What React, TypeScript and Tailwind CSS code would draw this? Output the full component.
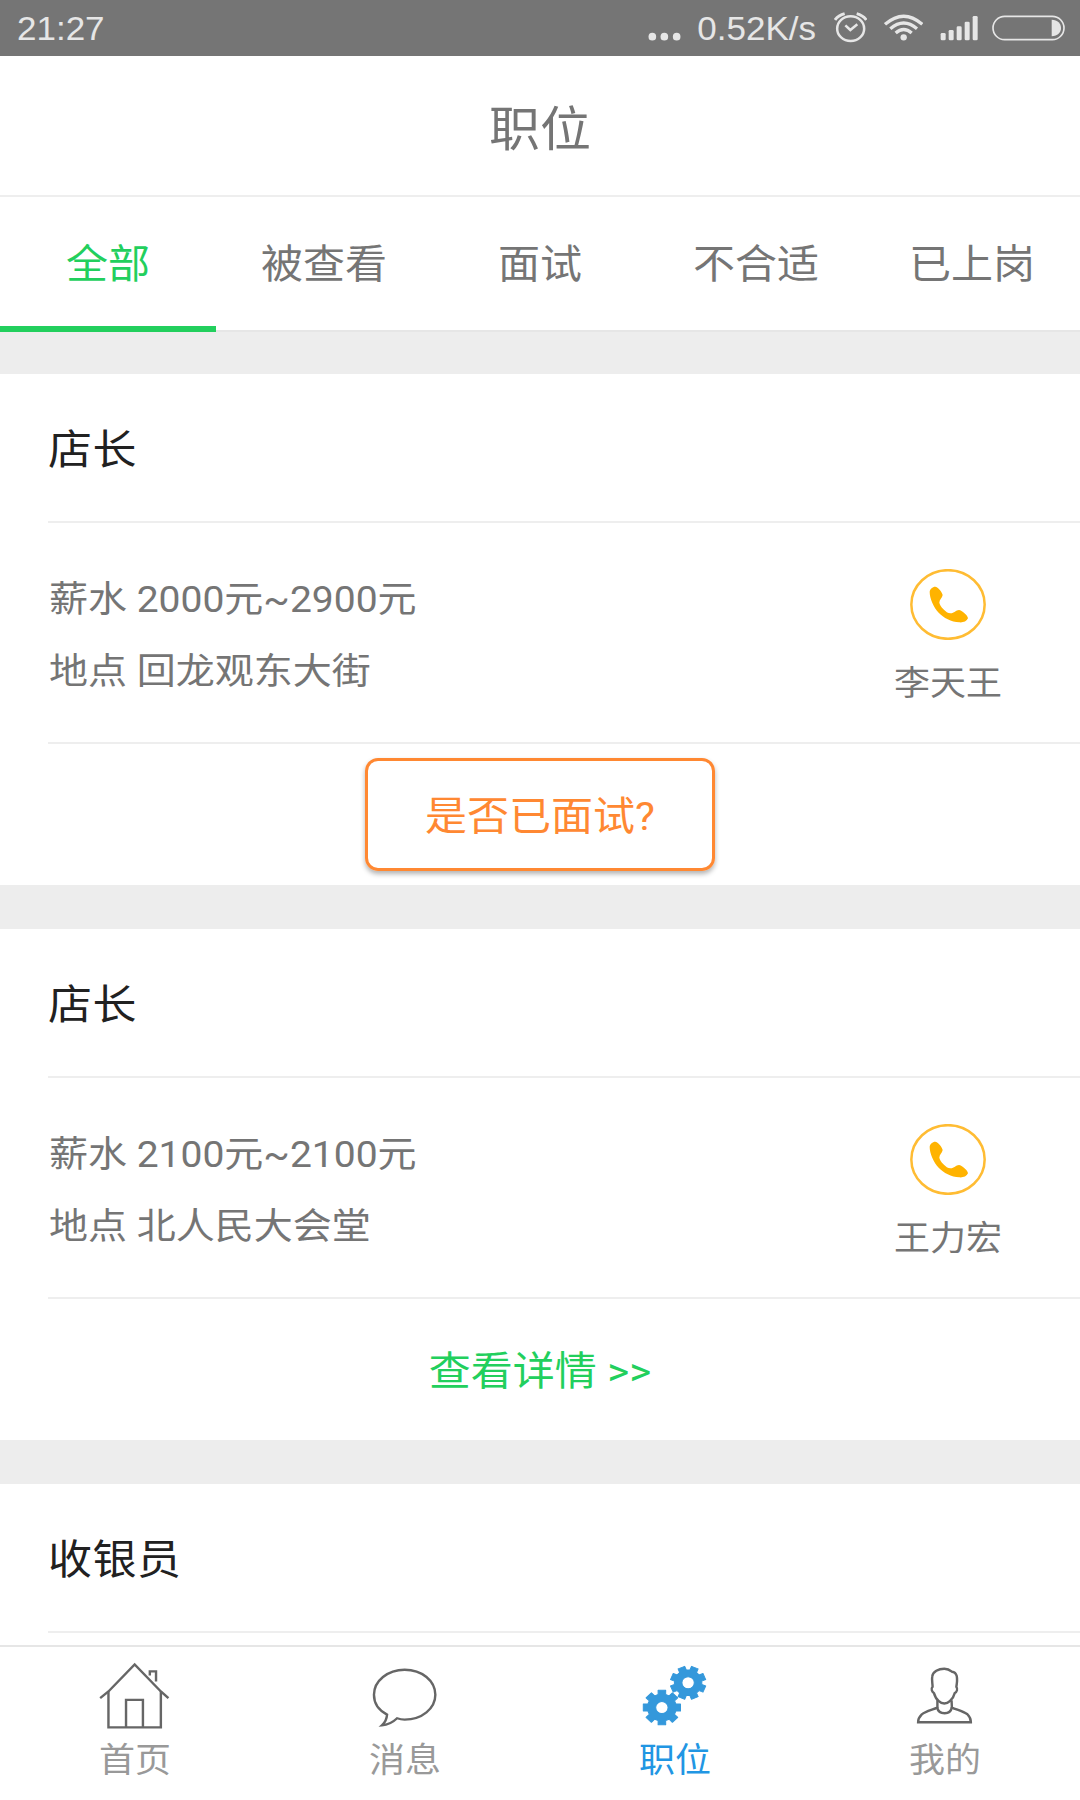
import { ReactNode } from "react";
import clsx from "clsx";

interface Job {
  title: string;
  details?: {
    salary: string;
    place: string;
    contact: string;
    action: "confirm" | "detail";
  };
}

const jobs: Job[] = [
  {
    title: "店长",
    details: { salary: "2000元~2900元", place: "回龙观东大街", contact: "李天王", action: "confirm" },
  },
  {
    title: "店长",
    details: { salary: "2100元~2100元", place: "北人民大会堂", contact: "王力宏", action: "detail" },
  },
  { title: "收银员" },
];

const tabs = ["全部", "被查看", "面试", "不合适", "已上岗"];

// Glyphs are slightly wider than tall across the whole screen
function Label({ children, className = "" }: { children: ReactNode; className?: string }) {
  return (
    <span className={clsx("block scale-y-[0.9375] whitespace-nowrap", className)}>{children}</span>
  );
}

function StatusBar() {
  return (
    <div className="flex h-14 shrink-0 items-center bg-[#757575] pl-[17px] pr-[15px] font-['Liberation_Sans',sans-serif] text-[35px] leading-none text-[#e6e6e6]">
      <Label className="mr-auto">21:27</Label>
      <svg className="mr-4 h-14 w-[33px]" viewBox="52 0 99 168" fill="currentColor">
        <circle cx="65" cy="110" r="11.5" />
        <circle cx="101" cy="110" r="11.5" />
        <circle cx="138" cy="110" r="11.5" />
      </svg>
      <Label>0.52K/s</Label>
      <svg className="ml-[18px] h-14 w-[33px]" viewBox="613 0 99 168" fill="none" stroke="currentColor" strokeWidth="7.500">
        <ellipse cx="663" cy="86" rx="40.500" ry="37" />
        <path d="M647 76 662 90 683 73" />
        <path d="M616 60Q626 46 645 41M681 41Q700 46 710 60" strokeWidth="9" />
      </svg>
      <svg className="ml-[17px] h-14 w-[39px]" viewBox="763 0 117 168" fill="none" stroke="currentColor" strokeWidth="10">
        <path d="M766 73Q822 24 878 73M782 86Q822 52 862 86M798 99Q822 78 846 99" />
        <circle cx="822" cy="112" r="9.500" fill="currentColor" stroke="none" />
      </svg>
      <svg className="ml-[17px] h-14 w-[38px]" viewBox="931 0 114 168" fill="currentColor">
        <rect x="933" y="99" width="15" height="22" rx="4" />
        <rect x="957" y="90" width="15" height="31" rx="4" />
        <rect x="981" y="79" width="15" height="42" rx="4" />
        <rect x="1005" y="65" width="15" height="56" rx="4" />
        <rect x="1029" y="48" width="15" height="73" rx="4" />
      </svg>
      <svg className="ml-3.5 h-14 w-[73px]" viewBox="1087 0 219 168" fill="none" stroke="currentColor" strokeWidth="5">
        <rect x="1090" y="49" width="213" height="70" rx="35" />
        <path d="M1266 59C1284 60 1294 70 1294 84S1284 108 1266 109Z" fill="currentColor" stroke="none" />
      </svg>
    </div>
  );
}

function PhoneIcon() {
  return (
    <svg className="h-[71px] w-[76px]" viewBox="0 0 228 213">
      <ellipse cx="114" cy="106.500" rx="110" ry="103" fill="none" stroke="#ffbc33" strokeWidth="7.500" />
      <path
        fill="#ffb300"
        d="M75 53C83 52 97 70 98 78C97 86 88 92 88 101C90 112 108 132 121 133C131 134 138 123 147 123C155 124 174 139 174 148C170 158 158 161 148 160C124 159 100 146 86 131C70 113 59 88 59 68C60 60 68 53 75 53Z"
      />
    </svg>
  );
}

function JobCard({ title, details }: Job) {
  return (
    <section className="shrink-0 bg-white pl-12">
      <div className="flex h-[149px] items-center border-b-2 border-[#eee] pt-1 text-[44px] tracking-[0.5px] text-[#212121]">
        <Label>{title}</Label>
      </div>
      {details && (
        <>
          <div className="flex h-[221px] justify-between border-b-2 border-[#eee]">
            <div className="pt-[41px] pl-px text-[39px] leading-[72px]">
              <Label>薪水 {details.salary}</Label>
              <Label>地点 {details.place}</Label>
            </div>
            <div className="flex w-[264px] flex-col items-center pt-[46px] text-[36px] leading-[54px]">
              <PhoneIcon />
              <Label className="mt-[17px]">{details.contact}</Label>
            </div>
          </div>
          <div className="-ml-12 flex h-[141px] items-center justify-center text-[42px]">
            {details.action === "confirm" ? (
              <button className="flex h-[113px] w-[350px] items-center justify-center rounded-[13px] border-3 border-[#ff8832] pt-1 text-[#ff8832] shadow-[0_3px_5px_rgba(0,0,0,0.3)]">
                <Label>是否已面试?</Label>
              </button>
            ) : (
              <Label className="pt-1 text-[#22cf5d]">查看详情 &gt;&gt;</Label>
            )}
          </div>
        </>
      )}
    </section>
  );
}

function NavIcon({ children }: { children: ReactNode }) {
  return (
    <svg
      className="h-[70px] w-20"
      viewBox="0 0 232 209"
      preserveAspectRatio="none"
      fill="none"
      stroke="#666"
      strokeWidth="7"
    >
      {children}
    </svg>
  );
}

function HomeIcon() {
  return (
    <NavIcon>
      <path d="M15 111 39 91 115 10 191 91 213 111" />
      <path d="M39 90V198H191V90M90 198V116H139V198M159 43V31H177V61" />
    </NavIcon>
  );
}

function MessageIcon() {
  return (
    <NavIcon>
      <path d="M93 171C101 174 108 175 115 175C165 175 204 142 204 101C204 59 165 26 115 26C66 26 26 59 26 101C26 127 41 148 64 160C63 173 59 183 49 192C66 191 81 183 93 171Z" />
    </NavIcon>
  );
}

// Eight-toothed gear outline with a round hole
function gearPath(cx: number, cy: number, outer: number, root: number, hole: number, turn: number) {
  const points: string[] = [];
  for (let i = 0; i < 8; i++) {
    const mid = i * 45 + turn;
    for (const [offset, radius] of [[-15, root], [-11.5, outer], [11.5, outer], [15, root]]) {
      const a = ((mid + offset) * Math.PI) / 180;
      points.push(`${(cx + radius * Math.sin(a)).toFixed(1)} ${(cy - radius * 0.96 * Math.cos(a)).toFixed(1)}`);
    }
  }
  return `M${points.join("L")}ZM${cx - hole} ${cy}a${hole} ${hole} 0 1 0 ${hole * 2} 0a${hole} ${hole} 0 1 0 ${-hole * 2} 0Z`;
}

function GearsIcon() {
  return (
    <NavIcon>
      <g fill="#3498db" fillRule="evenodd" stroke="#3498db" strokeWidth="3" strokeLinejoin="round">
        <path d={gearPath(154, 65, 52, 40, 18, 22.5)} />
        <path d={gearPath(78, 139, 55, 42, 18, 0)} />
      </g>
    </NavIcon>
  );
}

function PersonIcon() {
  return (
    <NavIcon>
      <path d="M114 23C97 23 81 31 79 46C77 58 80 67 80 77C75 83 78 91 84 96C87 107 92 115 98 120C103 125 109 127 114 127C120 127 126 124 130 120C137 113 142 106 144 96C151 91 153 83 149 77C151 65 152 55 150 45C148 37 144 33 136 32C129 26 122 23 114 23Z" />
      <path d="M94 117V139C78 146 59 149 48 160C40 168 38 174 38 183H191C191 174 189 167 181 159C169 150 152 146 136 139L135 117" />
      <path d="M93 138C95 149 103 156 115 156S134 149 136 138" />
    </NavIcon>
  );
}

const navItems = [
  { label: "首页", icon: <HomeIcon /> },
  { label: "消息", icon: <MessageIcon /> },
  { label: "职位", icon: <GearsIcon />, active: true },
  { label: "我的", icon: <PersonIcon /> },
];

export default function App() {
  return (
    <div className="flex h-[1800px] w-[1080px] flex-col overflow-hidden bg-[#ededed] font-[Roboto,'Noto_Sans_CJK_SC',sans-serif] text-[#757575]">
      <StatusBar />
      <header className="flex h-[141px] shrink-0 items-center justify-center border-b-2 border-[#eee] bg-white pt-2.5 text-[51px]">
        <Label>职位</Label>
      </header>
      <nav className="grid h-[135px] shrink-0 grid-cols-5 bg-white text-[42px]">
        {tabs.map((tab, i) => (
          <div
            key={tab}
            className={clsx(
              "flex items-center justify-center",
              i === 0 ? "border-b-6 border-[#22cf5d] pt-[5px] text-[#22cf5d]" : "border-b-2 border-[#e6e6e6] pt-px"
            )}
          >
            <Label>{tab}</Label>
          </div>
        ))}
      </nav>
      <main className="flex min-h-0 flex-1 flex-col gap-11 overflow-hidden pt-[42px]">
        {jobs.map((job, i) => (
          <JobCard key={i} {...job} />
        ))}
        <div className="-mt-11 flex-1 bg-white" />
      </main>
      <footer className="grid h-[155px] shrink-0 grid-cols-4 border-t-2 border-[#e6e6e6] bg-white text-[36px] leading-[54px]">
        {navItems.map(({ label, icon, active }) => (
          <div key={label} className="flex flex-col items-center pt-3.5">
            {icon}
            <Label className={clsx("mt-[3px]", active ? "text-[#2196e3]" : "text-[#999]")}>{label}</Label>
          </div>
        ))}
      </footer>
    </div>
  );
}
